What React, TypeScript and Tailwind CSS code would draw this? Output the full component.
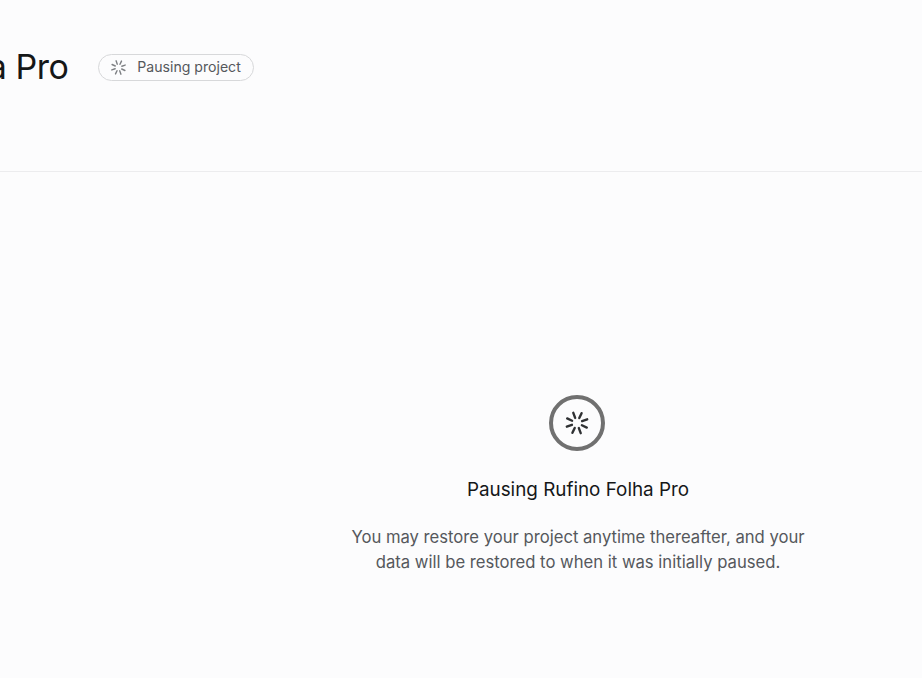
const SPOKES = [0, 45, 90, 135, 180, 225, 270, 315];

function Spinner({ size, color, width }: { size: number; color: string; width: number }) {
  return (
    <svg width={size} height={size} viewBox="0 0 24 24" fill="none" stroke={color} strokeWidth={width} strokeLinecap="round" aria-hidden="true">
      {SPOKES.map((deg) => (
        <line key={deg} x1="12" y1="2" x2="12" y2="7" transform={`rotate(${deg - 20} 12 12)`} />
      ))}
    </svg>
  );
}

export default function App() {
  return (
    <div className="min-h-[678px] w-full overflow-hidden bg-[#fcfcfd] font-['Inter',sans-serif]">
      {/* Header, title runs off the left edge */}
      <header className="flex h-[172px] items-start gap-[30px] border-b border-[#ececee] pt-[43px]">
        <h1 className="ml-[-187px] shrink-0 whitespace-nowrap text-[34px] leading-[48px] tracking-[-0.5px] text-[#151718]">
          Rufino Folha Pro
        </h1>
        <div className="mt-[11px] flex h-[27px] w-[156px] items-center gap-[10px] rounded-full border border-[#d7d8da] pl-[11px]">
          <Spinner size={17} color="#7e8084" width={2} />
          <span className="mt-[-2px] whitespace-nowrap text-[14.1px] leading-5 text-[#55585c]">Pausing project</span>
        </div>
      </header>

      <main className="ml-[234px] flex flex-col items-center pt-[223px]">
        <div className="mr-[2px] flex h-[56px] w-[56px] items-center justify-center rounded-full border-[4px] border-[#707070]">
          <Spinner size={26} color="#2f3133" width={2.2} />
        </div>
        <h2 className="mt-[25px] text-[18.85px] leading-7 text-[#151718]">Pausing Rufino Folha Pro</h2>
        <p className="mt-[21px] w-[470px] text-center text-[16.65px] leading-[25px] text-[#55585c]">
          You may restore your project anytime thereafter, and your data will be restored to when it was initially paused.
        </p>
      </main>
    </div>
  );
}
